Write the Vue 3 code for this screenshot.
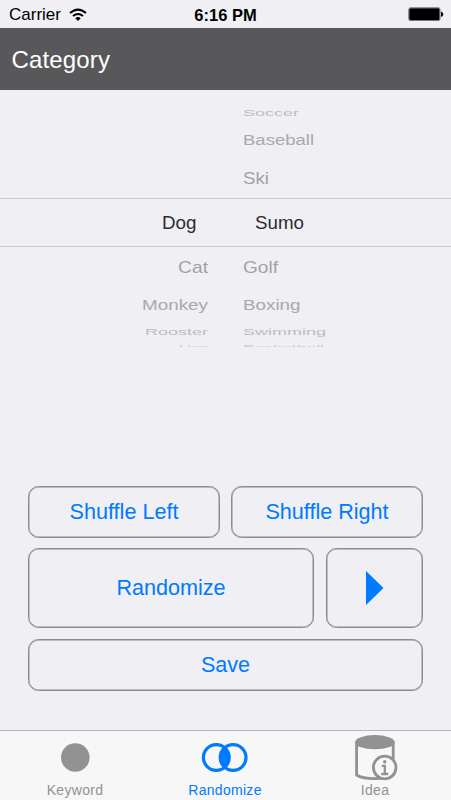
<script setup>
const left = [
  { t: '', h: 24 }, { t: '', h: 30 }, { t: '', h: 46 },
  { t: 'Dog', h: 42, w: 34.5, s: 1, on: true },
  { t: 'Cat', h: 47, s: 0.94, w: 30 },
  { t: 'Monkey', h: 29, s: 0.78, w: 66, o: 0.9 },
  { t: 'Rooster', h: 25, s: 0.47, w: 63, o: 0.65 },
  { t: 'Lion', h: 3, s: 0.3, w: 29, o: 0.5, cut: true },
]
const right = [
  { t: 'Soccer', h: 24, s: 0.47, w: 56, o: 0.65 },
  { t: 'Baseball', h: 30, s: 0.78, w: 71, o: 0.9 },
  { t: 'Ski', h: 46, s: 0.94, w: 26 },
  { t: 'Sumo', h: 42, s: 1, w: 49, on: true },
  { t: 'Golf', h: 47, s: 0.94, w: 35 },
  { t: 'Boxing', h: 29, s: 0.78, w: 57.5, o: 0.9 },
  { t: 'Swimming', h: 25, s: 0.47, w: 83, o: 0.65 },
  { t: 'Basketball', h: 3, s: 0.3, w: 81, o: 0.5, cut: true },
]
</script>

<template>
  <div class="screen">
    <header class="status">
      <div class="carrier">
        <span>Carrier</span>
        <svg width="18" height="14" viewBox="0 0 18 14" fill="none" stroke="#000" stroke-width="2">
          <path d="M1 5.1Q9-1.9 17 5.1" /><path d="M4 8.1Q9 3.8 14 8.1" /><path d="M6.3 10.2Q9 7.9 11.7 10.2L9 13Z" fill="#000" stroke="none" />
        </svg>
      </div>
      <span class="time">6:16 PM</span>
      <svg class="battery" width="36" height="15" viewBox="0 0 36 15">
        <rect x=".9" y=".9" width="31" height="12.6" rx="1.8" fill="#000" stroke="#777" stroke-width="1.2" />
        <path d="M33 4.7h.8q1.4 1 1.4 2.5t-1.4 2.5H33z" />
      </svg>
    </header>
    <div class="nav">Category</div>
    <section class="picker">
      <div v-for="(col, c) in [left, right]" :key="c" class="col" :class="c ? 'right' : 'left'">
        <div v-for="(r, i) in col" :key="i" class="row" :class="{ on: r.on, cut: r.cut }" :style="{ height: r.h + 'px' }">
          <svg v-if="r.t" :width="r.w" height="24" :style="{ transform: `scaleY(${r.s})`, opacity: r.o || 1 }">
            <text x="0" y="18.5" :textLength="r.w" lengthAdjust="spacingAndGlyphs">{{ r.t }}</text>
          </svg>
        </div>
      </div>
    </section>
    <section class="actions">
      <div class="line">
        <button class="half"><span>Shuffle Left</span></button>
        <button class="half"><span>Shuffle Right</span></button>
      </div>
      <div class="line tall">
        <button class="wide"><span>Randomize</span></button>
        <button class="play"><svg width="18" height="34" viewBox="0 0 18 34"><path d="M0 0L17.5 17L0 34Z" fill="#007aff" /></svg></button>
      </div>
      <div class="line"><button class="full"><span>Save</span></button></div>
    </section>
    <nav class="tabs">
      <div class="tab">
        <svg width="48" height="50" viewBox="0 0 48 50"><circle cx="24.3" cy="26.5" r="14.3" fill="#929292" /></svg>
        <span>Keyword</span>
      </div>
      <div class="tab active">
        <svg width="48" height="50" viewBox="0 0 48 50">
          <g fill="none" stroke="#007aff" stroke-width="3.2"><circle cx="15.3" cy="26.5" r="12.9" /><circle cx="32.1" cy="26.5" r="12.9" /></g>
          <path d="M23.7 16.5a13 13 0 0 1 0 20a13 13 0 0 1 0-20z" fill="#007aff" />
        </svg>
        <span>Randomize</span>
      </div>
      <div class="tab">
        <svg width="48" height="50" viewBox="0 0 48 50">
          <path d="M5.6 10.5V44Q11 47.6 24 47.6Q37 47.6 42.2 44V10.5" fill="none" stroke="#929292" stroke-width="2.8" />
          <ellipse cx="23.9" cy="11.2" rx="19.7" ry="7.1" fill="#929292" />
          <circle cx="33.7" cy="36.5" r="11.3" fill="#f7f7f7" stroke="#929292" stroke-width="2.8" />
          <circle cx="33.7" cy="30.8" r="1.7" fill="#929292" />
          <path d="M30.8 34.8h3v8.2M30.3 43h7" fill="none" stroke="#929292" stroke-width="2.3" />
        </svg>
        <span>Idea</span>
      </div>
    </nav>
  </div>
</template>

<style>
body { margin: 0; }
</style>
<style scoped>
.screen { width: 451px; height: 800px; box-sizing: border-box; display: flex; flex-direction: column; background: #efeff4; font-family: "Liberation Sans", Arial, sans-serif; overflow: hidden; }
.status { height: 28px; flex: none; display: grid; grid-template-columns: 1fr auto 1fr; align-items: center; padding: 0 8px; color: #000; font-size: 17px; }
.carrier { display: flex; align-items: center; gap: 8px; line-height: 28px; padding: 1px 0 0 1px; }
.time { font-weight: bold; font-size: 16.5px; padding-top: 1px; }
.battery { justify-self: end; margin-right: -1px; }
.nav { height: 62px; flex: none; background: #58585a; color: #fff; font-size: 24px; line-height: 63px; padding-left: 11.5px; letter-spacing: .15px; }
.picker { height: 257px; flex: none; display: grid; grid-template-columns: 208px 208px; column-gap: 35px; padding-top: 11px; box-sizing: border-box; background: linear-gradient(#c9c9ce, #c9c9ce) 0 108px / 100% 1px no-repeat, linear-gradient(#c9c9ce, #c9c9ce) 0 156px / 100% 1px no-repeat; }
.row { display: flex; align-items: center; }
.left .row { justify-content: flex-end; }
.row svg { flex: none; overflow: visible; fill: #a2a2a6; font-size: 18.5px; }
.row.on svg { fill: #2c2c2e; }
.left .row.on { padding-right: 12px; }
.right .row.on { padding-left: 12px; }
.row.cut { overflow: hidden; align-items: flex-start; }
.row.cut svg { margin-top: -9px; }
.actions { padding: 139px 28px 0; display: flex; flex-direction: column; gap: 10px; }
.line { display: flex; gap: 11px; height: 52px; }
.line.tall { height: 80px; gap: 12px; margin-bottom: 1px; }
button { display: flex; align-items: center; justify-content: center; padding: 0; border: 1px solid #8c8c8e; border-radius: 10.5px; box-shadow: inset 0 0 0 .5px #8c8c8e; background: transparent; color: #007aff; font: 21.6px "Liberation Sans", Arial, sans-serif; }
.half, .full { flex: 1; }
.wide { width: 286px; flex: none; }
.play { flex: 1; }
.tabs { margin-top: auto; height: 70px; box-sizing: border-box; border-top: 1px solid #b9b9bd; background: #f7f7f7; display: grid; grid-template-columns: repeat(3, 150px); }
.tab { display: flex; flex-direction: column; align-items: center; color: #929292; font-size: 14px; line-height: 19px; letter-spacing: .3px; }
.active { color: #007aff; }
</style>
